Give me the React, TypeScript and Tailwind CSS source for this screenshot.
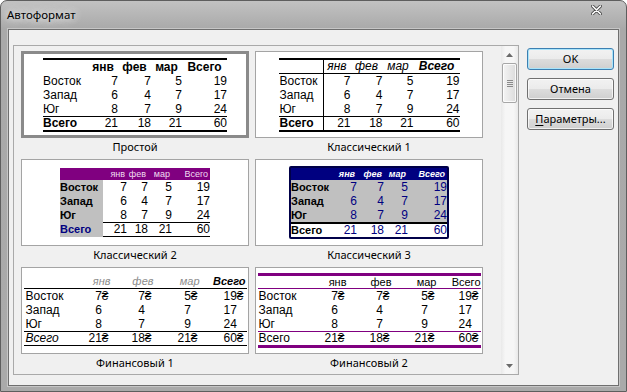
import React from "react";

const ARIAL = "font-['Liberation_Sans',Arial,sans-serif]";
const UI = "font-['Noto_Sans','Segoe_UI',sans-serif]";

const HEAD = ["янв", "фев", "мар", "Всего"];
const BODY = [
  ["Восток", "7", "7", "5", "19"],
  ["Запад", "6", "4", "7", "17"],
  ["Юг", "8", "7", "9", "24"],
];
const TOTAL = ["Всего", "21", "18", "21", "60"];

function Money({ v, sign }: { v: string; sign: boolean }) {
  return (
    <>
      <span>{v}</span>
      <span className={sign ? "" : "invisible"}>₴</span>
    </>
  );
}

function TProstoy() {
  const w = ["w-[45px]", "w-[30px]", "w-[33px]", "w-[31px]", "w-[45px]"];
  return (
    <div className={`w-[184px] ${ARIAL} text-[12px] leading-[14px] text-black`}>
      <div className="h-[2px] bg-black" />
      <div className="flex h-[14px] font-bold">
        <div className={w[0]} />
        {HEAD.map((h, i) => (
          <div key={i} className={`${w[i + 1]} text-center`}>{h}</div>
        ))}
      </div>
      {BODY.map((r, ri) => (
        <div key={ri} className="flex h-[14px]">
          {r.map((c, i) => (
            <div key={i} className={`${w[i]} ${i === 0 ? "text-left" : "text-right"}`}>{c}</div>
          ))}
        </div>
      ))}
      <div className="h-[1px] bg-black" />
      <div className="flex h-[13px] leading-[13px]">
        {TOTAL.map((c, i) => (
          <div key={i} className={`${w[i]} ${i === 0 ? "text-left font-bold" : "text-right"}`}>{c}</div>
        ))}
      </div>
      <div className="h-[2px] bg-black" />
    </div>
  );
}

function TClassic1() {
  const w = ["w-[45px]", "w-[27px]", "w-[32px]", "w-[31px]", "w-[46px]"];
  return (
    <div className={`w-[181px] ${ARIAL} text-[12px] leading-[13px] text-black`}>
      <div className="h-[2px] bg-black" />
      <div className="flex h-[14px] border-b border-black italic">
        <div className={`${w[0]} border-r border-black`} />
        {HEAD.map((h, i) => (
          <div key={i} className={`${w[i + 1]} text-center ${i === 3 ? "font-bold" : ""}`}>{h}</div>
        ))}
      </div>
      {BODY.map((r, ri) => (
        <div key={ri} className="flex h-[14px] leading-[14px]">
          {r.map((c, i) => (
            <div key={i} className={`${w[i]} ${i === 0 ? "text-left pl-[1px] border-r border-black" : "text-right"}`}>{c}</div>
          ))}
        </div>
      ))}
      <div className="h-[1px] bg-black" />
      <div className="flex h-[13px]">
        {TOTAL.map((c, i) => (
          <div key={i} className={`${w[i]} ${i === 0 ? "text-left pl-[1px] font-bold border-r border-black" : "text-right"}`}>{c}</div>
        ))}
      </div>
      <div className="h-[2px] bg-black" />
    </div>
  );
}

function TClassic2() {
  const w = ["w-[43px]", "w-[24px]", "w-[21px]", "w-[24px]", "w-[38px]"];
  return (
    <div className={`w-[150px] ${ARIAL} text-black`}>
      <div className="flex h-[12px] bg-[#800080] text-[#f0dcf0] text-[9px] leading-[12px]">
        <div className={w[0]} />
        {HEAD.map((h, i) => (
          <div key={i} className={`${w[i + 1]} text-right pr-[2px]`}>{h}</div>
        ))}
      </div>
      {BODY.map((r, ri) => (
        <div key={ri} className="flex h-[14px] text-[12px] leading-[14px]">
          {r.map((c, i) => (
            <div key={i} className={`${w[i]} ${i === 0 ? "bg-[#c0c0c0] font-bold text-[11px]" : "text-right"}`}>{c}</div>
          ))}
        </div>
      ))}
      <div className="flex h-[15px] text-[12px] leading-[13px]">
        <div className={`${w[0]} bg-[#c0c0c0] font-bold text-[11px] leading-[15px] text-[#000080]`}>{TOTAL[0]}</div>
        <div className="flex w-[107px] border-y border-black">
          {TOTAL.slice(1).map((c, i) => (
            <div key={i} className={`${w[i + 1]} text-right`}>{c}</div>
          ))}
        </div>
      </div>
    </div>
  );
}

function TClassic3() {
  const w = ["w-[41px]", "w-[25px]", "w-[27px]", "w-[24px]", "w-[39px]"];
  return (
    <div className={`w-[160px] border-2 border-[#000048] rounded-[2px] overflow-hidden ${ARIAL}`}>
      <div className="flex h-[12px] bg-[#000080] text-white italic font-bold text-[9px] leading-[12px]">
        <div className={w[0]} />
        {HEAD.map((h, i) => (
          <div key={i} className={`${w[i + 1]} text-right pr-[2px]`}>{h}</div>
        ))}
      </div>
      <div className="bg-[#c0c0c0]">
        {BODY.map((r, ri) => (
          <div key={ri} className="flex h-[14px] text-[12px] leading-[14px]">
            {r.map((c, i) => (
              <div key={i} className={`${w[i]} ${i === 0 ? "font-bold text-[11px] text-black" : "text-right text-[#000080]"}`}>{c}</div>
            ))}
          </div>
        ))}
      </div>
      <div className="h-[2px] bg-black" />
      <div className="flex h-[13px] bg-white text-[12px] leading-[13px]">
        {TOTAL.map((c, i) => (
          <div key={i} className={`${w[i]} ${i === 0 ? "font-bold text-[11px] text-black" : "text-right text-[#000080]"}`}>{c}</div>
        ))}
      </div>
    </div>
  );
}

function TFin1() {
  const w = ["w-[42px]", "w-[46px]", "w-[43px]", "w-[46px]", "w-[46px]"];
  return (
    <div className={`w-[223px] ${ARIAL} text-[12px] leading-[14px] text-black`}>
      <div className="flex h-[14px] border-b border-black italic text-[11px] leading-[13px]">
        <div className={w[0]} />
        {HEAD.map((h, i) => (
          <div key={i} className={`${w[i + 1]} text-right pr-[1px] ${i === 3 ? "font-bold text-black" : "text-[#8c8c8c]"}`}>{h}</div>
        ))}
      </div>
      {BODY.map((r, ri) => (
        <div key={ri} className="flex h-[14px]">
          {r.map((c, i) => (
            <div key={i} className={`${w[i]} ${i === 0 ? "pl-[2px]" : "text-right pr-[3px]"}`}>
              {i === 0 ? c : <Money v={c} sign={ri === 0} />}
            </div>
          ))}
        </div>
      ))}
      <div className="flex h-[15px] border-y border-black leading-[13px]">
        {TOTAL.map((c, i) => (
          <div key={i} className={`${w[i]} ${i === 0 ? "pl-[2px] italic" : "text-right pr-[3px]"}`}>
            {i === 0 ? c : <Money v={c} sign />}
          </div>
        ))}
      </div>
    </div>
  );
}

function TFin2() {
  const w = ["w-[43px]", "w-[46px]", "w-[45px]", "w-[45px]", "w-[44px]"];
  return (
    <div className={`w-[223px] ${ARIAL} text-[12px] leading-[14px] text-black`}>
      <div className="h-[3px] bg-[#800080]" />
      <div className="flex h-[13px] border-b border-[#800080] text-[11px] leading-[12px]">
        <div className={w[0]} />
        {HEAD.map((h, i) => (
          <div key={i} className={`${w[i + 1]} text-right`}>{h}</div>
        ))}
      </div>
      {BODY.map((r, ri) => (
        <div key={ri} className="flex h-[14px]">
          {r.map((c, i) => (
            <div key={i} className={`${w[i]} ${i === 0 ? "pl-[1px]" : "text-right pr-[2px]"}`}>
              {i === 0 ? c : <Money v={c} sign={ri === 0} />}
            </div>
          ))}
        </div>
      ))}
      <div className="flex h-[14px] border-t border-[#800080] leading-[13px]">
        {TOTAL.map((c, i) => (
          <div key={i} className={`${w[i]} ${i === 0 ? "pl-[1px]" : "text-right pr-[2px]"}`}>
            {i === 0 ? c : <Money v={c} sign />}
          </div>
        ))}
      </div>
      <div className="h-[3px] bg-[#800080]" />
    </div>
  );
}

function Item({ label, selected, children }: { label: string; selected?: boolean; children: React.ReactNode }) {
  return (
    <div className="flex flex-col w-[228px]">
      <div
        className={`h-[87px] w-[228px] bg-white flex items-center justify-center ${
          selected ? "border-[3px] border-[#8a8a8a]" : "border border-[#a4a4a4]"
        }`}
      >
        {children}
      </div>
      <div className={`h-[21px] pt-[2px] text-center text-[11px] leading-[14px] text-black ${UI}`}>{label}</div>
    </div>
  );
}

function Arrow({ up }: { up?: boolean }) {
  return (
    <svg width="7" height="4" viewBox="0 0 7 4">
      <path d={up ? "M0 4 L3.5 0 L7 4 Z" : "M0 0 L3.5 4 L7 0 Z"} fill="#6a6a6a" />
    </svg>
  );
}

function Scrollbar() {
  return (
    <div className="w-[17px] h-full flex flex-col bg-[linear-gradient(to_right,#e9e9e9,#f6f6f6_25%,#f6f6f6_75%,#e9e9e9)]">
      <div className="h-[17px] flex items-center justify-center">
        <Arrow up />
      </div>
      <div className="h-[40px] mx-[1px] rounded-[2px] border border-[#a7a7a7] bg-[linear-gradient(to_right,#f4f4f4,#e8e8e8_50%,#dcdcdc)] shadow-[inset_0_0_0_1px_rgba(255,255,255,0.8)] flex flex-col items-center justify-center gap-[1px]">
        <div className="w-[6px] h-[1px] bg-[#8a8a8a]" />
        <div className="w-[6px] h-[1px] bg-[#8a8a8a]" />
        <div className="w-[6px] h-[1px] bg-[#8a8a8a]" />
        <div className="w-[6px] h-[1px] bg-[#8a8a8a]" />
      </div>
      <div className="flex-1" />
      <div className="h-[17px] flex items-center justify-center">
        <Arrow />
      </div>
    </div>
  );
}

const BTN =
  "h-[22px] w-[87px] rounded-[3px] border bg-[linear-gradient(to_bottom,#f2f2f2_0%,#ebebeb_50%,#dddddd_50%,#cfcfcf_100%)] flex items-center justify-center text-[11px] leading-[14px] text-black";

export default function App() {
  return (
    <div className="w-[627px] h-[392px] bg-white overflow-hidden">
      <div className="w-[627px] h-[392px] rounded-t-[7px] border border-[#5e5e5e] bg-[linear-gradient(to_bottom,#c2c2c2_0px,#a9a9a9_28px,#aaaaaa_100%)] flex flex-col">
        <div className="h-[28px] flex items-start shrink-0">
          <div
            className={`pl-[6px] pt-[6px] text-[11.5px] leading-[16px] text-black ${UI} [text-shadow:0_0_6px_#e8e8e8,0_0_10px_#e0e0e0,0_0_14px_#dddddd]`}
          >
            Автоформат
          </div>
          <div className="ml-auto mr-[24px] mt-[4px]">
            <svg width="11" height="10" viewBox="0 0 11 10">
              <path d="M1.5 1 L9.5 9 M9.5 1 L1.5 9" stroke="#4a4a4a" strokeWidth="3.2" strokeLinecap="round" />
              <path d="M1.5 1 L9.5 9 M9.5 1 L1.5 9" stroke="#ffffff" strokeWidth="1.6" strokeLinecap="round" />
            </svg>
          </div>
        </div>
        <div className="mx-[7px] mb-[5px] flex-1 border border-[#6f6f6f] bg-[#f0f0f0] flex shadow-[0_0_0_1px_#c6c6c6]">
          <div className="ml-[4px] mt-[15px] w-[506px] h-[330px] border border-[#a9a9a9] bg-[#f0f0f0] flex">
            <div className="flex-1 overflow-hidden pl-[7px] pt-[5px]">
              <div className="grid grid-cols-[228px_228px] gap-x-[6px]">
                <Item label="Простой" selected>
                  <TProstoy />
                </Item>
                <Item label="Классический 1">
                  <TClassic1 />
                </Item>
                <Item label="Классический 2">
                  <TClassic2 />
                </Item>
                <Item label="Классический 3">
                  <TClassic3 />
                </Item>
                <Item label="Финансовый 1">
                  <TFin1 />
                </Item>
                <Item label="Финансовый 2">
                  <TFin2 />
                </Item>
              </div>
            </div>
            <Scrollbar />
          </div>
          <div className={`ml-[8px] pt-[18px] flex flex-col gap-[8px] ${UI}`}>
            <div className={`${BTN} border-[#3c7fb1] shadow-[inset_0_0_0_1px_#a8e4fb]`}>OK</div>
            <div className={`${BTN} border-[#707070] shadow-[inset_0_0_0_1px_rgba(255,255,255,0.7)]`}>Отмена</div>
            <div className={`${BTN} border-[#707070] shadow-[inset_0_0_0_1px_rgba(255,255,255,0.7)]`}>
              <span>
                <span className="underline underline-offset-[2px]">П</span>араметры...
              </span>
            </div>
          </div>
        </div>
      </div>
    </div>
  );
}
